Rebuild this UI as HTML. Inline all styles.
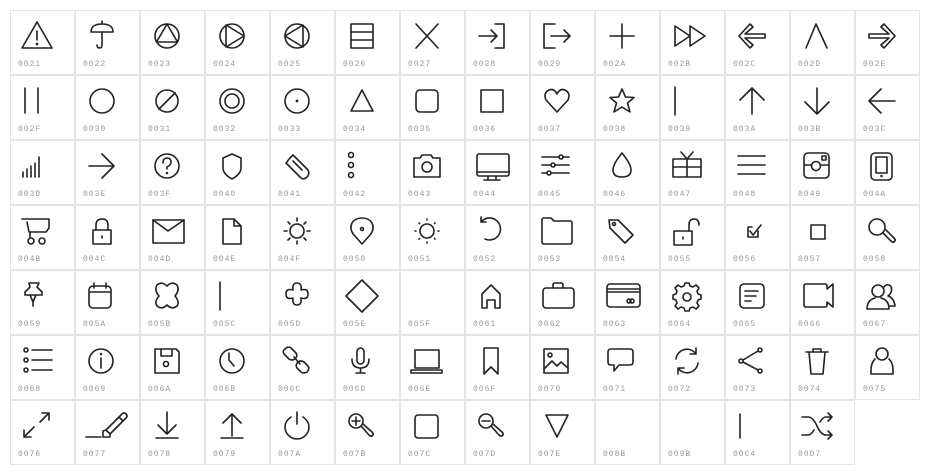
<!DOCTYPE html>
<html><head><meta charset="utf-8"><style>
body{margin:0;background:#fff;width:930px;height:475px;position:relative;overflow:hidden}
.c{position:absolute;width:63px;height:63px;border:1px solid #e4e4e4}
.c svg{position:absolute;left:-1px;top:-1px;width:65px;height:65px;fill:none;stroke:#222;stroke-width:1.6;stroke-linecap:round;stroke-linejoin:round}
.c span{position:absolute;left:7px;top:49px;font:8px "Liberation Mono",monospace;color:#999;letter-spacing:1px}
</style></head><body>
<div id="g"></div>
<script>
const I=[
["0021",'<path d="M27 12L42 38H12Z M27 21V30"/><circle cx="27" cy="34" r=".6"/>'],
["0022",'<path d="M16 22Q16 14 27 14Q38 14 38 22Z M27 14V11 M27 22V35Q27 38 24.5 38Q22 38 22 35"/>'],
["0023",'<circle cx="27" cy="26" r="12"/><path d="M27 14L37.5 32H16.5Z"/>'],
["0024",'<circle cx="27" cy="26" r="12"/><path d="M21 15L39 26L21 37Z"/>'],
["0025",'<circle cx="27" cy="26" r="12"/><path d="M33 15L15 26L33 37Z"/>'],
["0026",'<rect x="16" y="14" width="22" height="24"/><path d="M16 22H38M16 30H38"/>'],
["0027",'<path d="M16 14L38 38M38 14L16 38"/>'],
["0028",'<path d="M30 14H39V38H30M14 26H32M26 20L32 26L26 32"/>'],
["0029",'<path d="M25 14H14V38H25M21 26H40M34 20L40 26L34 32"/>'],
["002A",'<path d="M27 14V38M15 26H39"/>'],
["002B",'<path d="M15 16L30 26L15 36Z M30 16L45 26L30 36Z"/>'],
["002C",'<path d="M25 14L14 26L25 38L28 35L20 28H40V24H20L28 17Z"/>'],
["002D",'<path d="M16 38L26 14L37 38"/>'],
["002E",'<path d="M29 14L40 26L29 38L26 35L34 28H14V24H34L26 17Z"/>'],
["002F",'<path d="M15 13V38M28 13V38"/>'],
["0030",'<circle cx="27" cy="26" r="12"/>'],
["0031",'<circle cx="27" cy="26" r="11"/><path d="M19 34L35 18"/>'],
["0032",'<circle cx="27" cy="26" r="12"/><circle cx="27" cy="26" r="7"/>'],
["0033",'<circle cx="27" cy="26" r="12"/><circle cx="27" cy="26" r=".6"/>'],
["0034",'<path d="M27 15L38 36H16Z"/>'],
["0035",'<rect x="16" y="15" width="22" height="22" rx="4"/>'],
["0036",'<rect x="16" y="15" width="22" height="22"/>'],
["0037",'<path d="M27 37L16 25Q13 18 19 15Q24 13 27 19Q30 13 35 15Q41 18 38 25Z"/>'],
["0038",'<path d="M27 14L30.5 22L39 22.5L32.5 28L35 37L27 32L19 37L21.5 28L15 22.5L23.5 22Z"/>'],
["0039",'<path d="M15 12V40"/>'],
["003A",'<path d="M27 13V39M15 25L27 13L39 25"/>'],
["003B",'<path d="M27 13V39M15 27L27 39L39 27"/>'],
["003C",'<path d="M14 26H40M26 14L14 26L26 38"/>'],
["003D",'<path d="M13 37V32M17 37V29M21 37V26M25 37V23M29 37V17"/>'],
["003E",'<path d="M14 26H39M27 14L39 26L27 38"/>'],
["003F",'<circle cx="27" cy="26" r="12"/><path d="M23 23Q23 18 27 18Q31 18 31 22Q31 25 27 27V29"/><circle cx="27" cy="33" r=".5"/>'],
["0040",'<path d="M27 14L36 18V28Q36 34 27 39Q18 34 18 28V18Z"/>'],
["0041",'<path d="M20 18L23 15L38 30Q40 34 37 37Q34 40 31 38L16 23ZM23 21L32 30"/>'],
["0042",'<circle cx="16" cy="15" r="2.5"/><circle cx="16" cy="25" r="2.5"/><circle cx="16" cy="35" r="2.5"/>'],
["0043",'<path d="M14 18H20L22 15H31L33 18H40V37H14Z"/><circle cx="27" cy="27" r="5"/>'],
["0044",'<rect x="12" y="14" width="32" height="22" rx="2"/><path d="M12 32H44M23 36V40M31 36V40M19 40H35"/>'],
["0045",'<path d="M12 17H39M12 25H39M12 33H39"/><circle cx="31" cy="17" r="2" fill="#fff"/><circle cx="23" cy="25" r="2" fill="#fff"/><circle cx="19" cy="33" r="2" fill="#fff"/>'],
["0046",'<path d="M27 13Q36 24 36 30Q36 37 27 37Q18 37 18 30Q18 24 27 13Z"/>'],
["0047",'<path d="M13 19H41V37H13ZM13 27H41M27 19V37M21 12L27 19L33 12"/>'],
["0048",'<path d="M13 16H40M13 25H40M13 34H40"/>'],
["0049",'<rect x="14" y="13" width="25" height="25" rx="4"/><circle cx="26" cy="26" r="4.5"/><path d="M14 25H21M31 25H39"/><rect x="32" y="16" width="4" height="4"/>'],
["004A",'<rect x="16" y="13" width="21" height="27" rx="4"/><rect x="21" y="17" width="11" height="16"/><circle cx="26.5" cy="36" r=".5"/>'],
["004B",'<path d="M12 14H39V23L36 27H19L17 17M20 28V33"/><circle cx="21" cy="36" r="3"/><circle cx="32" cy="36" r="3"/>'],
["004C",'<rect x="18" y="25" width="18" height="14"/><path d="M21 25V20Q21 14 27 14Q33 14 33 20V25M27 31V33"/>'],
["004D",'<rect x="13" y="15" width="31" height="23"/><path d="M13 15L28 26L44 15"/>'],
["004E",'<path d="M18 14H29L36 21V39H18ZM29 14V21H36"/>'],
["004F",'<circle cx="27" cy="26" r="7"/><path d="M27 13V16M27 36V39M14 26H17M37 26H40M18 17L20 19M34 33L36 35M36 17L34 19M18 35L20 33"/>'],
["0050",'<path d="M27 39L19 30Q14 24 17 18Q20 13 27 13Q34 13 37 18Q40 24 35 30Z"/><circle cx="27" cy="24" r="1.5"/>'],
["0051",'<circle cx="27" cy="26" r="7"/><path d="M27 14V15M27 37V38M15 26H16M38 26H39M19 18L19.5 18.5M35 34L34.5 33.5M35 18L34.5 18.5M19 34L19.5 33.5"/>'],
["0052",'<path d="M16 17A11 11 0 1 1 20 34M16 12V17H21"/>'],
["0053",'<path d="M12 15Q12 13 14 13H21L24 16H40Q42 16 42 18V37Q42 39 40 39H14Q12 39 12 37Z"/>'],
["0054",'<path d="M14 15H23L38 30L30 38L15 23Z"/><circle cx="19" cy="19" r="1.5"/>'],
["0055",'<rect x="14" y="26" width="18" height="14"/><path d="M29 26V20Q29 14 34 14Q39 14 39 20M23 32V34"/>'],
["0056",'<path d="M27 22H23V32H33V26M25 26L28 30L36 20"/>'],
["0057",'<rect x="21" y="20" width="14" height="14"/>'],
["0058",'<circle cx="22" cy="22" r="8"/><path d="M28 28L36 36Q38 38 39.5 36.5Q41 35 39 33L31 25"/>'],
["0059",'<path d="M19 13H29L27 17L32 22V25H15V22L20 17ZM20 25L23 32L26 25M23 32V36"/>'],
["005A",'<rect x="14" y="16" width="22" height="22" rx="4"/><path d="M14 22H36M19 13V18M31 13V18"/>'],
["005B",'<path d="M17 15Q22 11 27 16Q32 11 37 15Q40 20 35 26Q40 32 37 36Q32 40 27 35Q22 40 17 36Q14 32 19 26Q14 20 17 15Z"/>'],
["005C",'<path d="M15 12V40"/>'],
["005D",'<path d="M23 20Q22 13 27 13Q32 13 31 20Q38 18 38 24Q38 30 31 28Q32 35 27 35Q22 35 23 28Q16 30 16 24Q16 18 23 20Z"/>'],
["005E",'<path d="M27 10L43 26L27 42L11 26Z"/>'],
["005F",''],
["0061",'<path d="M17 38V24L26 15L35 24V38H30V30H22V38Z"/>'],
["0062",'<rect x="13" y="18" width="31" height="20" rx="3"/><path d="M23 18V15Q23 13 25 13H31Q33 13 33 15V18"/>'],
["0063",'<rect x="12" y="14" width="33" height="23" rx="3"/><path d="M12 19H45M12 22H45"/><circle cx="34" cy="31" r="2"/><circle cx="37" cy="31" r="2"/>'],
["0064",'<path d="M25 13H29L30 16L33 17L36 15L39 18L37 21L38 24L41 25V29L38 30L37 33L39 36L36 39L33 37L30 38L29 41H25L24 38L21 37L18 39L15 36L17 33L16 30L13 29V25L16 24L17 21L15 18L18 15L21 17L24 16Z"/><circle cx="27" cy="27" r="4"/>'],
["0065",'<rect x="15" y="14" width="24" height="24" rx="4"/><path d="M20 21H33M20 26H31M20 31H26"/>'],
["0066",'<path d="M16 14H35Q37 14 37 16V19L43 14V37L37 32V35Q37 37 35 37H16Q14 37 14 35V16Q14 14 16 14Z"/>'],
["0067",'<circle cx="23" cy="21" r="6"/><path d="M12 39Q12 30 20 28M26 28Q34 30 34 39H12M29 17Q31 14 34 15Q38 17 36 22Q35 25 33 26Q39 28 40 36H35"/>'],
["0068",'<circle cx="16" cy="15" r="2"/><circle cx="16" cy="25" r="2"/><circle cx="16" cy="35" r="2"/><path d="M22 15H42M22 25H42M22 35H42"/>'],
["0069",'<circle cx="26" cy="26" r="12"/><path d="M26 23V33"/><circle cx="26" cy="19" r=".5"/>'],
["006A",'<path d="M15 14H36L39 17V38H15ZM21 14V21H32V14"/><circle cx="26" cy="29" r="2.5"/>'],
["006B",'<circle cx="27" cy="26" r="12"/><path d="M24 18V25L29 31"/>'],
["006C",'<path d="M15 14Q18 11 21 13L26 18Q28 21 25 24Q22 26 19 24L14 19Q12 16 15 14ZM28 27Q31 25 34 27L38 31Q40 34 37 37Q34 39 31 37L27 33Q25 30 28 27ZM24 22L30 29"/>'],
["006D",'<rect x="22" y="13" width="7" height="16" rx="3.5"/><path d="M17 24Q17 33 25.5 33Q34 33 34 24M25.5 33V38M21 38H30"/>'],
["006E",'<rect x="15" y="15" width="24" height="18"/><rect x="11" y="35" width="31" height="3"/>'],
["006F",'<path d="M19 13H33V39L26 32L19 39Z"/>'],
["0070",'<rect x="14" y="14" width="24" height="24"/><circle cx="20" cy="20" r="2"/><path d="M14 34L22 26L27 31L31 27L38 33"/>'],
["0071",'<path d="M16 14H35Q38 14 38 17V27Q38 30 35 30H24L19 36V30H16Q13 30 13 27V17Q13 14 16 14Z"/>'],
["0072",'<path d="M16 24A11 11 0 0 1 36 19M38 28A11 11 0 0 1 18 33M36 13V19H30M18 39V33H24"/>'],
["0073",'<circle cx="35" cy="15" r="2"/><circle cx="16" cy="26" r="2"/><circle cx="35" cy="36" r="2"/><path d="M18 25L33 16M18 27L33 35"/>'],
["0074",'<path d="M16 17H38M19 17L21 39H33L35 17M23 17V14H31V17"/>'],
["0075",'<circle cx="27" cy="19" r="6"/><path d="M20 24Q16 28 16 35V39H38V35Q38 28 34 24"/>'],
["0076",'<path d="M14 37L24 27M30 22L39 13M14 30V37H21M32 13H39V20"/>'],
["0077",'<path d="M11 37H26M31 30L47 14Q49 12 51 14Q53 16 51 18L35 34V37H28V31ZM44 17L48 21M31 30L35 34"/>'],
["0078",'<path d="M27 12V34M18 25L27 34L36 25M16 38H38"/>'],
["0079",'<path d="M27 14V36M18 23L27 14L36 23M16 38H38"/>'],
["007A",'<path d="M27 12V24M21 17Q15 21 15 27A12 12 0 0 0 39 27Q39 21 33 17"/>'],
["007B",'<circle cx="21" cy="21" r="7"/><path d="M21 17V25M17 21H25M26 26L34 35Q36 37 37.5 35.5Q39 34 37 32L28 24"/>'],
["007C",'<rect x="15" y="15" width="23" height="23" rx="3"/>'],
["007D",'<circle cx="21" cy="21" r="7"/><path d="M17 21H25M26 26L34 35Q36 37 37.5 35.5Q39 34 37 32L28 24"/>'],
["007E",'<path d="M16 15H38L27 37Z"/>'],
["008B",''],["009B",''],
["00C4",'<path d="M15 14V38"/>'],
["00D7",'<path d="M12 17H18Q23 17 27 26Q31 35 36 35H42M12 35H18Q21 35 24 30M30 22Q33 17 36 17H42M38 13L42 17L38 21M38 31L42 35L38 39"/>']
];
let h='';I.forEach((it,i)=>{const r=Math.floor(i/14),c=i%14;h+=`<div class="c" style="left:${10+65*c}px;top:${10+65*r}px"><svg viewBox="0 0 65 65">${it[1]}</svg><span>${it[0]}</span></div>`});
document.getElementById('g').innerHTML=h;
</script>
</body></html>
